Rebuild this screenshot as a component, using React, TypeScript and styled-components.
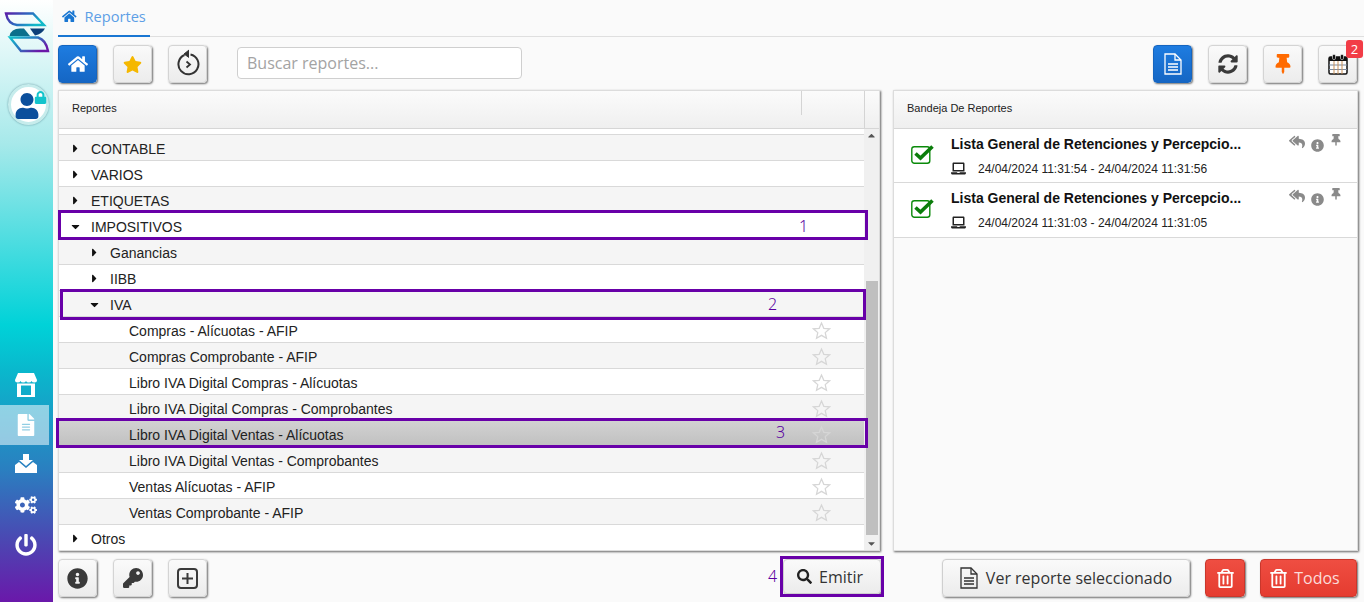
import React from "react";
import styled, { createGlobalStyle } from "styled-components";
import {
  FaHome, FaStar, FaFileAlt, FaCogs, FaPowerOff, FaUser, FaLock, FaInfoCircle, FaKey,
  FaSyncAlt, FaThumbtack, FaSearch, FaRegTrashAlt, FaReplyAll,
  FaLaptop, FaCaretRight, FaCaretDown, FaCaretUp,
} from "react-icons/fa";

const Global = createGlobalStyle`
  html, body { margin: 0; padding: 0; height: 100%; overflow: hidden; background: #fafafa; }
  * { box-sizing: border-box; }
  body { font-family: "Liberation Sans", Arial, sans-serif; color: #1c1c1c; }
`;

const Page = styled.div`
  position: relative;
  display: flex;
  width: 1364px;
  height: 602px;
  overflow: hidden;
  background: #fafafa;
`;

const Sidebar = styled.aside`
  width: 53px;
  flex: none;
  display: flex;
  flex-direction: column;
  background: linear-gradient(180deg, #ffffff 0%, #a6e9ea 24%, #00d2d8 54%, #0ab6cc 62%, #2a7fc0 78%, #4c46b2 90%, #6a18aa 100%);
`;
const LogoBox = styled.div`
  height: 74px;
  svg { display: block; }
`;
const Avatar = styled.div`
  position: relative;
  width: 41px;
  height: 41px;
  margin: 10px 0 0 8px;
  border-radius: 50%;
  background: #fff;
  border: 3px solid #c6ecec;
  box-shadow: 0 0 2px rgba(0, 60, 80, 0.5);
  display: flex;
  align-items: flex-end;
  justify-content: center;
  color: #0b4f9c;
  font-size: 26px;
  padding: 0 4px 3px 0;
  svg { display: block; }
`;
const AvatarLock = styled.span`
  position: absolute;
  right: -1px;
  top: 4px;
  font-size: 13px;
  line-height: 1;
  color: #14c4cc;
`;
const SideNav = styled.nav`
  margin-top: 240px;
  display: flex;
  flex-direction: column;
`;
const SideItem = styled.div<{ $active?: boolean; $size: number; $lift?: number }>`
  width: 49px;
  height: 40px;
  display: flex;
  align-items: center;
  justify-content: center;
  padding: 0 0 ${(p) => p.$lift ?? 0}px 3px;
  color: #fff;
  font-size: ${(p) => p.$size}px;
  background: ${(p) => (p.$active ? "rgba(255,255,255,0.52)" : "transparent")};
`;

const Main = styled.main`
  flex: 1;
  min-width: 0;
  display: flex;
  flex-direction: column;
  padding: 0 7px 0 5px;
`;
const TabBar = styled.div`
  height: 37px;
  margin-right: -7px;
  border-bottom: 1px solid #dfdfdf;
  display: flex;
`;
const Tab = styled.div`
  width: 92px;
  height: 37px;
  border-bottom: 2px solid #1976d2;
  display: flex;
  align-items: center;
  padding: 0 0 3px 4px;
  gap: 8px;
  color: #1976d2;
  font-family: "Open Sans", sans-serif;
  font-size: 14.6px;
  span { color: #5d9fe6; }
`;
const Toolbar = styled.div`
  height: 38px;
  margin-top: 8px;
  display: flex;
  align-items: flex-start;
  gap: 16px;
`;
const IconButton = styled.button<{ $primary?: boolean; $color?: string; $size?: number; $lift?: number }>`
  position: relative;
  width: 39px;
  height: 38px;
  flex: none;
  padding: 0 0 ${(p) => p.$lift ?? 0}px;
  display: flex;
  align-items: center;
  justify-content: center;
  border-radius: 4px;
  border: 1px solid ${(p) => (p.$primary ? "#1565c0" : "#d4d4d4")};
  background: ${(p) => (p.$primary ? "linear-gradient(180deg,#1e7ce0,#1566c4)" : "linear-gradient(180deg,#fafafa,#ececec)")};
  box-shadow: 1px 1px 2px rgba(0, 0, 0, 0.55);
  color: ${(p) => p.$color ?? (p.$primary ? "#fff" : "#3a3a3a")};
  font-size: ${(p) => p.$size ?? 20}px;
`;
const Search = styled.input`
  width: 285px;
  height: 32px;
  margin: 2px 0 0 14px;
  padding: 0 9px;
  border: 1px solid #cfcfcf;
  border-radius: 4px;
  background: #fff;
  font-family: "Open Sans", sans-serif;
  font-size: 16px;
  outline: none;
  &::placeholder { color: #a3a3a3; opacity: 1; }
`;
const Spacer = styled.div`
  flex: 1;
`;
const Badge = styled.span`
  position: absolute;
  right: -7px;
  top: -6px;
  width: 17px;
  height: 18px;
  border-radius: 3px;
  background: #f23c46;
  color: #fff;
  font-family: "Open Sans", sans-serif;
  font-size: 13px;
  line-height: 18px;
  text-align: center;
`;

const Columns = styled.div`
  margin-top: 7px;
  height: 461px;
  display: flex;
  gap: 13px;
`;
const Panel = styled.section<{ $width: number }>`
  width: ${(p) => p.$width}px;
  flex: none;
  display: flex;
  flex-direction: column;
  border: 1px solid #dcdcdc;
  box-shadow: 1px 1px 2px rgba(0, 0, 0, 0.6);
  background: #fafafa;
  overflow: hidden;
`;
const PanelHeader = styled.header`
  height: 38px;
  flex: none;
  display: flex;
  background: linear-gradient(180deg, #fbfbfb, #efefef);
  border-bottom: 1px solid #d6d6d6;
  font-size: 11px;
  color: #222;
`;
const HeaderTitle = styled.div`
  flex: 1;
  padding: 11px 0 0 13px;
`;
const HeaderCell = styled.div<{ $width: number }>`
  width: ${(p) => p.$width}px;
  height: 24px;
  border-left: 1px solid #d4d4d4;
`;
const HeaderEnd = styled.div`
  width: 15px;
  border-left: 1px solid #d4d4d4;
`;
const TreeBody = styled.div`
  flex: 1;
  min-height: 0;
  display: flex;
`;
const TreeList = styled.div`
  flex: 1;
  min-width: 0;
  background: #fff;
  padding-top: 5px;
`;
const Row = styled.div<{ $alt: boolean; $selected?: boolean; $level: number }>`
  height: 26px;
  display: flex;
  align-items: center;
  border-top: 1px solid #d9d9d9;
  padding: 2px 0 0 ${(p) => 10 + p.$level * 19}px;
  font-size: 14px;
  color: #222;
  background: ${(p) =>
    p.$selected ? "linear-gradient(180deg,#d2d2d2,#c0c0c0)" : p.$alt ? "#f5f5f5" : "#fff"};
`;
const Caret = styled.span`
  width: 22px;
  flex: none;
  display: flex;
  font-size: 13px;
  color: #111;
`;
const RowLabel = styled.span<{ $leaf: boolean }>`
  flex: 1;
  padding-left: ${(p) => (p.$leaf ? 22 : 0)}px;
`;
const StarCell = styled.span`
  width: 19px;
  height: 19px;
  margin: 0 33px 0 0;
  color: #d6d6d6;
  svg { display: block; }
`;
const Scrollbar = styled.div`
  width: 15px;
  flex: none;
  position: relative;
  background: #f0f0f0;
  display: flex;
  flex-direction: column;
  justify-content: space-between;
  align-items: center;
  color: #555;
  font-size: 11px;
  padding: 1px 0;
`;
const ScrollThumb = styled.div`
  position: absolute;
  left: 2px;
  right: 1px;
  top: 152px;
  height: 254px;
  background: #bfbfbf;
`;
const ReportRow = styled.div<{ $height: number }>`
  height: ${(p) => p.$height}px;
  display: flex;
  background: #fff;
  border-bottom: 1px solid #d9d9d9;
`;
const ReportCheck = styled.div`
  width: 57px;
  flex: none;
  padding: 15px 0 0 17px;
  svg { display: block; }
`;
const ReportInfo = styled.div`
  flex: 1;
  padding-top: 7px;
`;
const ReportTitle = styled.div`
  font-size: 14px;
  font-weight: 700;
  line-height: 16px;
  color: #111;
`;
const ReportDates = styled.div`
  display: flex;
  align-items: center;
  margin-top: 9px;
  font-size: 12px;
  line-height: 14px;
  color: #222;
  gap: 12px;
  svg { font-size: 15px; }
`;
const ReportActions = styled.div`
  width: 68px;
  flex: none;
  display: flex;
  gap: 6px;
  padding-top: 5px;
  color: #8a8a8a;
  align-items: flex-start;
`;
const ActionIcon = styled.span<{ $drop?: number; $size?: number }>`
  display: block;
  margin-top: ${(p) => p.$drop ?? 0}px;
  font-size: ${(p) => p.$size ?? 13}px;
  line-height: 0;
`;

const BottomBar = styled.div`
  height: 38px;
  margin-top: 8px;
  display: flex;
  gap: 16px;
`;
const LabelButton = styled.button<{ $danger?: boolean; $width: number; $gap?: number; $inset?: number }>`
  width: ${(p) => p.$width}px;
  height: 38px;
  flex: none;
  padding: 0 ${(p) => p.$inset ?? 0}px 0 0;
  display: flex;
  align-items: center;
  justify-content: center;
  gap: ${(p) => p.$gap ?? 8}px;
  border-radius: 4px;
  border: 1px solid ${(p) => (p.$danger ? "#c9372c" : "#cfcfcf")};
  background: ${(p) => (p.$danger ? "linear-gradient(180deg,#ef4e42,#e53c30)" : "linear-gradient(180deg,#fafafa,#ececec)")};
  box-shadow: 1px 1px 2px rgba(0, 0, 0, 0.55);
  color: ${(p) => (p.$danger ? "#fbdcd9" : "#333")};
  font-family: "Open Sans", sans-serif;
  font-size: 16px;
  svg { font-size: 19px; color: ${(p) => (p.$danger ? "#fff" : "#333")}; }
`;
const EmitirButton = styled(LabelButton)`
  height: 35px;
  margin-left: 560px;
  color: #333;
  svg { font-size: 15px; color: #222; }
`;
const RightGroup = styled.div`
  margin-left: 45px;
  display: flex;
  gap: 15px;
`;
const Annotation = styled.div<{ $x: number; $y: number; $w: number; $h: number }>`
  position: absolute;
  left: ${(p) => p.$x}px;
  top: ${(p) => p.$y}px;
  width: ${(p) => p.$w}px;
  height: ${(p) => p.$h}px;
  border: 3px solid #6800a8;
  pointer-events: none;
`;
const AnnotationNumber = styled.span<{ $x: number; $y: number }>`
  position: absolute;
  left: ${(p) => p.$x}px;
  top: ${(p) => p.$y}px;
  font-family: "Noto Sans", sans-serif;
  font-weight: 300;
  font-size: 16px;
  line-height: 20px;
  color: #5a00a0;
`;

const Logo = () => (
  <svg width="53" height="56" viewBox="0 0 53 56" fill="none">
    <defs>
      <linearGradient id="lg1" x1="0" y1="0" x2="1" y2="0.4">
        <stop offset="0" stopColor="#5a1fa8" />
        <stop offset="0.55" stopColor="#2a6cc0" />
        <stop offset="1" stopColor="#12b8c8" />
      </linearGradient>
      <linearGradient id="lg2" x1="0" y1="0" x2="1" y2="0.6">
        <stop offset="0" stopColor="#12c0cc" />
        <stop offset="0.5" stopColor="#2a7cc0" />
        <stop offset="1" stopColor="#6a18a8" />
      </linearGradient>
    </defs>
    <path d="M6 13.5 H33 L44 25 H17 Q8 24 6 13.5 Z" stroke="url(#lg1)" strokeWidth="2.4" />
    <path d="M10 37.5 H38 Q46 40 48 51 H21 Z" stroke="url(#lg2)" strokeWidth="2.4" />
    <path d="M9.5 36 Q11 28.5 20 28.5 H24 L30 36 Z" fill="#0b6f8c" />
    <path d="M30 28.5 H45 Q42 34 35 35.5 Z" fill="#0d3f78" />
  </svg>
);

const StoreIcon = () => (
  <svg width="22" height="24" viewBox="0 0 22 24">
    <path d="M3 0 H19 L22 7 Q22 9.5 19.5 9.5 Q17 9.5 16.5 8 Q16 9.5 13.8 9.5 Q11.5 9.5 11 8 Q10.5 9.5 8.2 9.5 Q6 9.5 5.5 8 Q5 9.5 2.5 9.5 Q0 9.5 0 7 Z" fill="#fff" />
    <path d="M2 10.5 H20 V24 H2 Z M6 12.5 V22 H16 V12.5 Z" fill="#fff" fillRule="evenodd" />
  </svg>
);

const InboxIcon = () => (
  <svg width="22" height="19" viewBox="0 0 22 19" fill="#fff">
    <path d="M8 0 H14 V6 H18 L11 12 L4 6 H8 Z" />
    <path d="M0 11 L4 8 L11 14 L18 8 L22 11 V19 H0 Z" />
  </svg>
);

const HistoryIcon = () => (
  <svg width="24" height="27" viewBox="0 0 24 27" fill="none" stroke="#333" strokeWidth="2">
    <path d="M8.5 6 A10 10 0 1 0 14.5 5.4" />
    <path d="M13 1 L8 5 L13 8.5" fill="#333" strokeWidth="1" />
    <path d="M10.5 12.5 L14 15.5 L10.5 18.5" strokeWidth="1.8" />
  </svg>
);

const CalendarIcon = () => (
  <svg width="20" height="21" viewBox="0 0 20 21">
    <rect x="1" y="3" width="18" height="17" rx="1.5" fill="#fff" stroke="#111" strokeWidth="1.5" />
    <rect x="1" y="3" width="18" height="4" fill="#111" />
    <rect x="4.5" y="0.5" width="3" height="5" rx="1.2" fill="#111" stroke="#fff" strokeWidth="0.6" />
    <rect x="12.5" y="0.5" width="3" height="5" rx="1.2" fill="#111" stroke="#fff" strokeWidth="0.6" />
    <path d="M1 11 H19 M1 15.5 H19" stroke="#7a8aa0" strokeWidth="1" />
    <path d="M6 7 V20 M10 7 V20 M14 7 V20" stroke="#c89058" strokeWidth="1" />
  </svg>
);

const DocIcon = () => (
  <svg width="18" height="22" viewBox="0 0 18 22" fill="none" stroke="currentColor" strokeWidth="1.3">
    <path d="M1 1 H11 L17 7 V21 H1 Z" />
    <path d="M11 1 V7 H17" />
    <path d="M4 11 H14 M4 14 H14 M4 17 H14" />
  </svg>
);

const PlusSquareIcon = () => (
  <svg width="21" height="21" viewBox="0 0 21 21" fill="none" stroke="#3a3a3a" strokeWidth="2">
    <rect x="1" y="1" width="19" height="19" rx="3" />
    <path d="M10.5 5 V16 M5 10.5 H16" />
  </svg>
);

const CheckBoxIcon = () => (
  <svg width="24" height="21" viewBox="0 0 24 21" fill="none">
    <rect x="0.8" y="2.8" width="18" height="16.5" rx="2.5" stroke="#0a8a0a" strokeWidth="1.4" />
    <path d="M4.5 9.5 L9.5 14 L21.5 2.5" stroke="#0b7d0b" strokeWidth="3.6" />
  </svg>
);

const EmptyStar = () => (
  <svg width="19" height="19" viewBox="0 0 24 24" fill="none" stroke="currentColor" strokeWidth="1.6">
    <path d="M12 2.5 L14.9 9.2 L22.2 9.9 L16.7 14.7 L18.3 21.8 L12 18.1 L5.7 21.8 L7.3 14.7 L1.8 9.9 L9.1 9.2 Z" />
  </svg>
);

type TreeItem = { label: string; level: number; open?: boolean; leaf?: boolean; selected?: boolean };

const tree: TreeItem[] = [
  { label: "CONTABLE", level: 0 },
  { label: "VARIOS", level: 0 },
  { label: "ETIQUETAS", level: 0 },
  { label: "IMPOSITIVOS", level: 0, open: true },
  { label: "Ganancias", level: 1 },
  { label: "IIBB", level: 1 },
  { label: "IVA", level: 1, open: true },
  { label: "Compras - Alícuotas - AFIP", level: 2, leaf: true },
  { label: "Compras Comprobante - AFIP", level: 2, leaf: true },
  { label: "Libro IVA Digital Compras - Alícuotas", level: 2, leaf: true },
  { label: "Libro IVA Digital Compras - Comprobantes", level: 2, leaf: true },
  { label: "Libro IVA Digital Ventas - Alícuotas", level: 2, leaf: true, selected: true },
  { label: "Libro IVA Digital Ventas - Comprobantes", level: 2, leaf: true },
  { label: "Ventas Alícuotas - AFIP", level: 2, leaf: true },
  { label: "Ventas Comprobante - AFIP", level: 2, leaf: true },
  { label: "Otros", level: 0 },
];

const reports = [
  { dates: "24/04/2024 11:31:54 - 24/04/2024 11:31:56", height: 54 },
  { dates: "24/04/2024 11:31:03 - 24/04/2024 11:31:05", height: 55 },
];

export default function App() {
  return (
    <Page>
      <Global />
      <Sidebar>
        <LogoBox><Logo /></LogoBox>
        <Avatar>
          <FaUser />
          <AvatarLock><FaLock /></AvatarLock>
        </Avatar>
        <SideNav>
          <SideItem $size={23}><StoreIcon /></SideItem>
          <SideItem $size={22} $active><FaFileAlt /></SideItem>
          <SideItem $size={21} $lift={4}><InboxIcon /></SideItem>
          <SideItem $size={22}><FaCogs /></SideItem>
          <SideItem $size={22}><FaPowerOff /></SideItem>
        </SideNav>
      </Sidebar>
      <Main>
        <TabBar>
          <Tab><FaHome /><span>Reportes</span></Tab>
        </TabBar>
        <Toolbar>
          <IconButton $primary $size={20}><FaHome /></IconButton>
          <IconButton $color="#f5b800" $size={19}><FaStar /></IconButton>
          <IconButton $lift={3}><HistoryIcon /></IconButton>
          <Search placeholder="Buscar reportes..." />
          <Spacer />
          <IconButton $primary><DocIcon /></IconButton>
          <IconButton $size={20}><FaSyncAlt /></IconButton>
          <IconButton $color="#ff6a00" $size={20}><FaThumbtack /></IconButton>
          <IconButton>
            <CalendarIcon />
            <Badge>2</Badge>
          </IconButton>
        </Toolbar>
        <Columns>
          <Panel $width={822}>
            <PanelHeader>
              <HeaderTitle>Reportes</HeaderTitle>
              <HeaderCell $width={63} />
              <HeaderEnd />
            </PanelHeader>
            <TreeBody>
              <TreeList>
                {tree.map((item, i) => (
                  <Row key={item.label} $alt={i % 2 === 0} $level={item.level} $selected={item.selected}>
                    {!item.leaf && (
                      <Caret>{item.open ? <FaCaretDown /> : <FaCaretRight />}</Caret>
                    )}
                    <RowLabel $leaf={!!item.leaf}>{item.label}</RowLabel>
                    {item.leaf && <StarCell><EmptyStar /></StarCell>}
                  </Row>
                ))}
              </TreeList>
              <Scrollbar>
                <FaCaretUp />
                <ScrollThumb />
                <FaCaretDown />
              </Scrollbar>
            </TreeBody>
          </Panel>
          <Panel $width={465}>
            <PanelHeader>
              <HeaderTitle>Bandeja De Reportes</HeaderTitle>
            </PanelHeader>
            {reports.map((r) => (
              <ReportRow key={r.dates} $height={r.height}>
                <ReportCheck>
                  <CheckBoxIcon />
                </ReportCheck>
                <ReportInfo>
                  <ReportTitle>Lista General de Retenciones y Percepcio...</ReportTitle>
                  <ReportDates><FaLaptop />{r.dates}</ReportDates>
                </ReportInfo>
                <ReportActions>
                  <ActionIcon $size={16}><FaReplyAll /></ActionIcon>
                  <ActionIcon $drop={5} $size={13}><FaInfoCircle /></ActionIcon>
                  <ActionIcon $size={12}><FaThumbtack /></ActionIcon>
                </ReportActions>
              </ReportRow>
            ))}
          </Panel>
        </Columns>
        <BottomBar>
          <IconButton $size={21}><FaInfoCircle /></IconButton>
          <IconButton $size={20}><FaKey /></IconButton>
          <IconButton><PlusSquareIcon /></IconButton>
          <EmitirButton $width={98} $gap={7} $inset={4}><FaSearch />Emitir</EmitirButton>
          <RightGroup>
            <LabelButton $width={248}><DocIcon />Ver reporte seleccionado</LabelButton>
            <LabelButton $danger $width={40}><FaRegTrashAlt /></LabelButton>
            <LabelButton $danger $width={97} $gap={6} $inset={8}><FaRegTrashAlt />Todos</LabelButton>
          </RightGroup>
        </BottomBar>
      </Main>
      <Annotation $x={58} $y={210} $w={810} $h={30} />
      <AnnotationNumber $x={799} $y={216}>1</AnnotationNumber>
      <Annotation $x={60} $y={289} $w={806} $h={31} />
      <AnnotationNumber $x={768} $y={294}>2</AnnotationNumber>
      <Annotation $x={56} $y={418} $w={812} $h={30} />
      <AnnotationNumber $x={776} $y={422}>3</AnnotationNumber>
      <Annotation $x={780} $y={556} $w={104} $h={41} />
      <AnnotationNumber $x={768} $y={566}>4</AnnotationNumber>
    </Page>
  );
}
